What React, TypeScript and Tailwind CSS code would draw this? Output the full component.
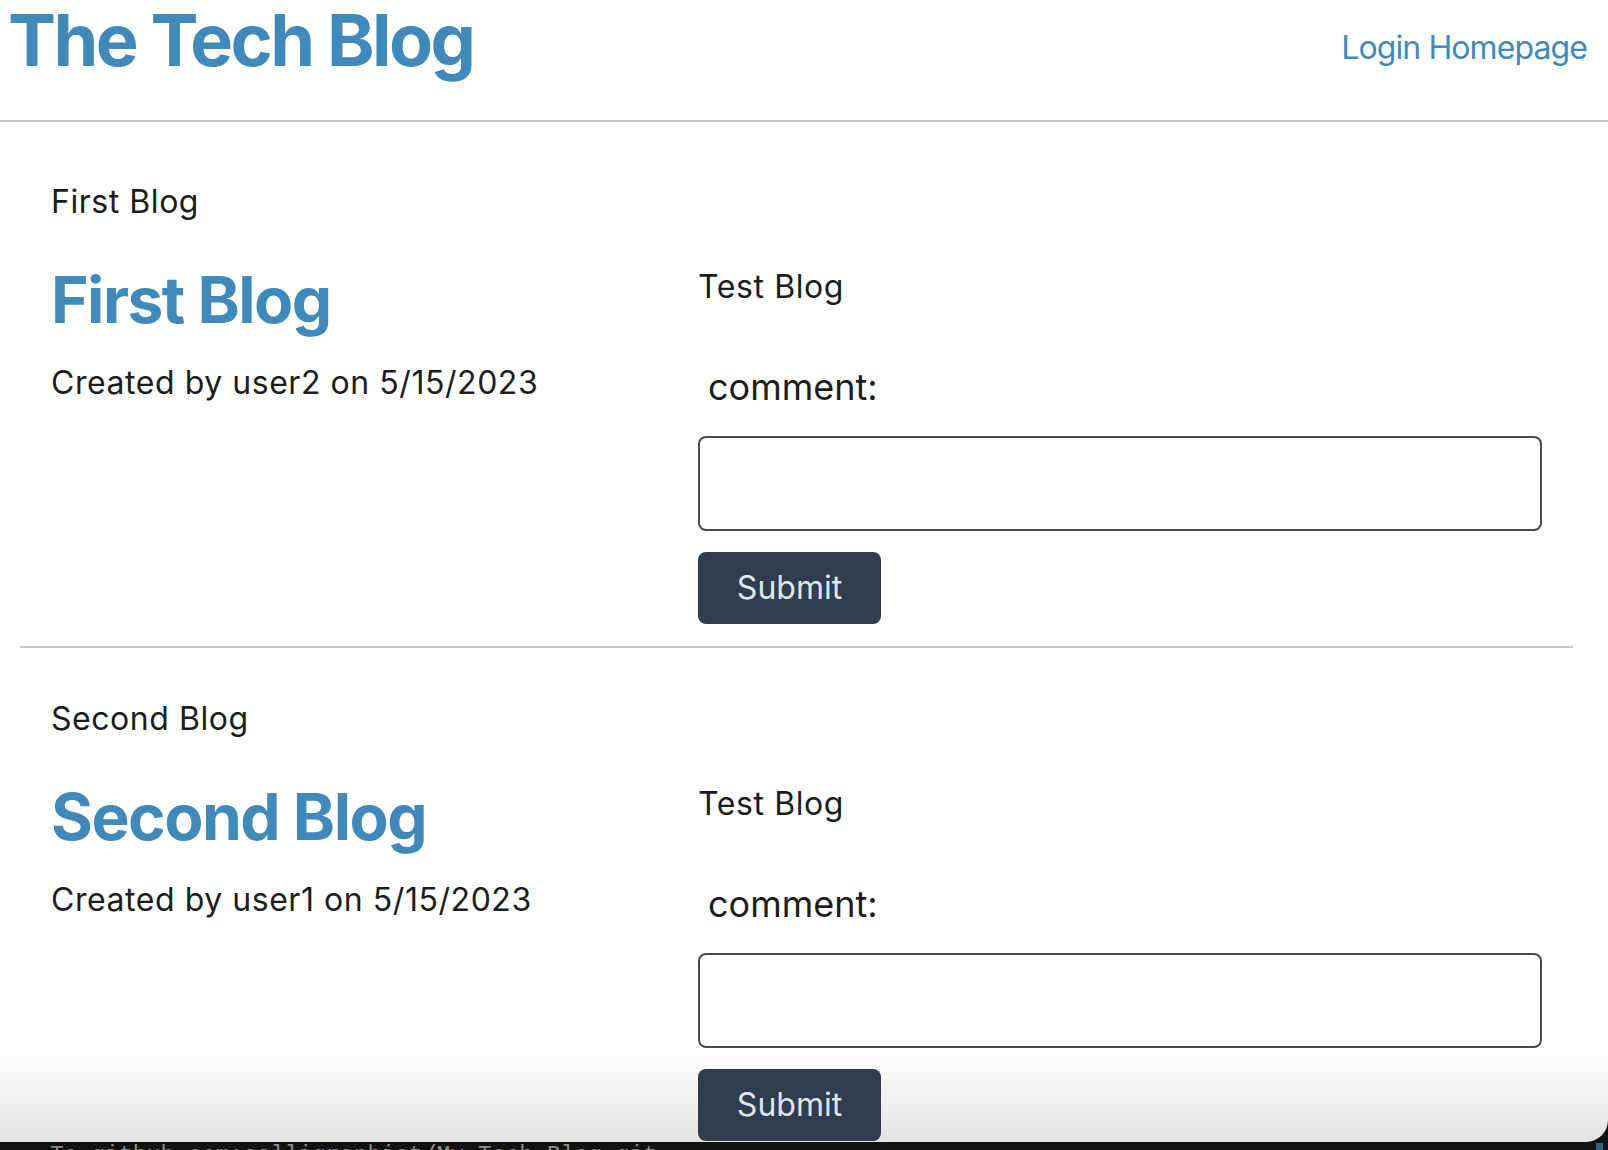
import React from "react";

type Post = { title: string; author: string; date: string; body: string };

const posts: Post[] = [
  { title: "First Blog", author: "user2", date: "5/15/2023", body: "Test Blog" },
  { title: "Second Blog", author: "user1", date: "5/15/2023", body: "Test Blog" },
];

function Article({ post }: { post: Post }) {
  return (
    <article className="ml-[20px] w-[1553px]">
      <div className="pl-[31px]">
        <p className="pt-[2px] text-[32px] leading-none tracking-[0.55px] text-[#1c1c1e]">{post.title}</p>
        <div className="mt-[48px] grid grid-cols-[647px_844px]">
          <div>
            <h2 className="pt-[2px] text-[64px] font-bold leading-none tracking-[-1.5px] text-[#4289bb]">
              <a href="#">{post.title}</a>
            </h2>
            <p className="mt-[35px] text-[32px] leading-none tracking-[0.55px] text-[#1c1c1e]">
              Created by {post.author} on {post.date}
            </p>
          </div>
          <div className="pt-[5px]">
            <p className="text-[32px] leading-none tracking-[0.6px] text-[#1c1c1e]">{post.body}</p>
            <form className="mt-[66px] flex flex-col" onSubmit={(e) => e.preventDefault()}>
              <label className="pl-[10px] text-[36px] leading-none text-[#1c1c1e]">comment:</label>
              <input
                type="text"
                className="mt-[31px] h-[95px] w-[844px] rounded-[8px] border-2 border-[#4a4a4a] bg-white px-3 text-[32px] outline-none"
              />
              <button
                type="submit"
                className="mt-[21px] h-[72px] w-[183px] rounded-[8px] bg-[#2f3d4e] text-[32px] leading-none text-[#dce8ee]"
              >
                Submit
              </button>
            </form>
          </div>
        </div>
      </div>
      <div className="mt-[22px] h-[2px] bg-[#c8c8c8]" />
    </article>
  );
}

export default function App() {
  return (
    <div className="relative h-[1150px] w-[1608px] overflow-hidden bg-[#121212]" style={{ fontFamily: "Inter, 'Noto Sans', sans-serif" }}>
      <div className="h-[1142px] w-[1608px] overflow-hidden rounded-br-[22px] bg-[linear-gradient(180deg,#ffffff_0%,#ffffff_92%,#e3e3e3_100%)]">
        <header className="flex h-[122px] items-start justify-between border-b-2 border-[#c8c8c8] pl-[8px] pr-[21px]">
          <h1 className="mt-[4px] text-[72px] font-bold leading-none tracking-[-2.6px] text-[#4289bb]">The Tech Blog</h1>
          <nav className="mt-[32px]">
            <a href="#" className="text-[32px] leading-none tracking-[-0.9px] text-[#4289bb]">
              Login Homepage
            </a>
          </nav>
        </header>
        <main className="flex flex-col gap-[53px] pt-[62px]">
          {posts.map((p) => (
            <Article key={p.title} post={p} />
          ))}
        </main>
      </div>
      <div className="h-[8px] overflow-hidden pl-[50px] pt-[3px]">
        <p className="text-[23px] leading-none text-[#8a8a8a]" style={{ fontFamily: "'Liberation Mono', monospace" }}>
          To github.com:calligraphist/My-Tech-Blog.git
        </p>
      </div>
      <div className="absolute bottom-0 right-[5px] h-[7px] w-[7px] bg-[#2f6283]" />
    </div>
  );
}
